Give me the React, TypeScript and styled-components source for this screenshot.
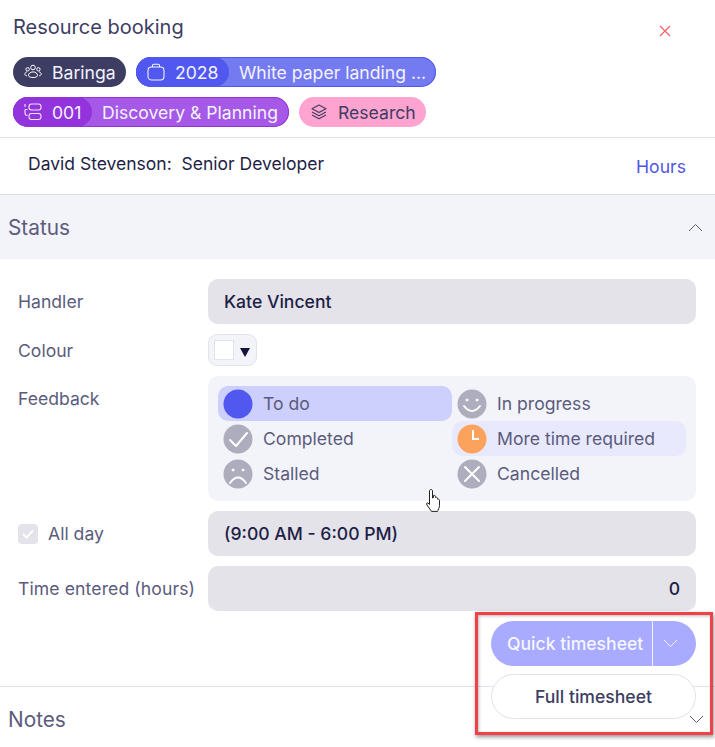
import React from "react";
import styled, { createGlobalStyle } from "styled-components";

const Global = createGlobalStyle`
  html, body { margin: 0; padding: 0; background: #fff; }
  body { font-family: Inter, "Noto Sans", sans-serif; overflow: hidden; }
`;

const Page = styled.div`
  position: relative;
  width: 715px;
  height: 747px;
  overflow: hidden;
  background: #fff;
`;

const Header = styled.header`
  height: 138px;
  box-sizing: border-box;
  padding: 16px 13px 0;
  position: relative;
  border-bottom: 1px solid #e2e2ea;
`;

const Title = styled.h1`
  margin: 0;
  font-size: 20px;
  line-height: 22px;
  font-weight: 400;
  color: #3d3d63;
`;

const CloseBtn = styled.button`
  position: absolute;
  right: 43px;
  top: 24px;
  width: 14px;
  height: 14px;
  padding: 0;
  border: 0;
  background: none;
  display: flex;
`;

const ChipRows = styled.div`
  margin-top: 19px;
  display: flex;
  flex-direction: column;
  gap: 10px;
`;

const ChipRow = styled.div`
  display: flex;
  gap: 10px;
`;

const Chip = styled.div<{ $bg: string; $fg?: string; $w: number; $edge?: string }>`
  height: 30px;
  box-sizing: border-box;
  border-radius: 15px;
  background: ${(p) => p.$bg};
  color: ${(p) => p.$fg ?? "#f3f3ff"};
  display: flex;
  align-items: center;
  font-size: 17.6px;
  font-weight: 400;
  white-space: nowrap;
  width: ${(p) => p.$w}px;
  overflow: hidden;
  ${(p) => (p.$edge ? `box-shadow: inset 0 0 0 1px ${p.$edge};` : "")}
`;

const ChipHead = styled.div<{ $bg: string; $w: number }>`
  height: 30px;
  width: ${(p) => p.$w}px;
  box-sizing: border-box;
  flex: none;
  background: ${(p) => p.$bg};
  border-radius: 0 15px 15px 0;
  display: flex;
  align-items: center;
  gap: 10px;
  padding-left: 11px;
`;

const ChipIcon = styled.span<{ $l: number; $r: number }>`
  display: flex;
  flex: none;
  margin-left: ${(p) => p.$l}px;
  margin-right: ${(p) => p.$r}px;
`;

const ChipText = styled.span`
  margin-left: 10px;
`;

const PersonRow = styled.div`
  height: 57px;
  box-sizing: border-box;
  padding: 15px 29px 0 28px;
  display: flex;
  justify-content: space-between;
  align-items: flex-start;
  border-bottom: 1px solid #dcdce4;
  font-size: 17.6px;
  line-height: 22px;
  color: #1e1e46;
`;

const PersonName = styled.span`
  white-space: pre;
  font-size: 17.5px;
`;

const HoursLink = styled.a`
  margin-top: 3px;
  color: #4f56e8;
`;

const SectionBand = styled.div`
  height: 64px;
  box-sizing: border-box;
  padding: 0 12px 0 8px;
  background: #f3f4fa;
  display: flex;
  align-items: center;
  justify-content: space-between;
  font-size: 20.8px;
  color: #5b5b7d;
`;

const Form = styled.div`
  padding: 20px 19px 0 18px;
  height: 428px;
  box-sizing: border-box;
  border-bottom: 1px solid #e2e2ea;
  display: grid;
  grid-template-columns: 190px 488px;
  grid-template-rows: 45px 32px 125px 45px 45px;
  row-gap: 10px;
`;

const Label = styled.label<{ $top?: number; $wide?: boolean }>`
  font-size: 17.6px;
  line-height: 22px;
  color: #5b5b7d;
  white-space: nowrap;
  align-self: ${(p) => (p.$top !== undefined ? "start" : "center")};
  ${(p) => (p.$top !== undefined ? `padding-top: ${p.$top}px;` : "")}
  ${(p) => (p.$wide ? "letter-spacing: 0.1px;" : "")}
  display: flex;
  align-items: center;
  gap: 10px;
`;

const Field = styled.div<{ $right?: boolean }>`
  background: #e3e3e9;
  border-radius: 10px;
  display: flex;
  align-items: center;
  justify-content: ${(p) => (p.$right ? "flex-end" : "flex-start")};
  padding: 0 16px;
  font-size: 17.6px;
  font-weight: 500;
  color: #1e1e46;
`;

const ColourBtn = styled.div`
  width: 49px;
  height: 32px;
  box-sizing: border-box;
  border: 1px solid #e2e2ea;
  border-radius: 9px;
  background: #f3f4fa;
  display: flex;
  align-items: center;
  padding-left: 5px;
  gap: 6px;
`;

const Swatch = styled.div`
  width: 20px;
  height: 20px;
  box-sizing: border-box;
  background: #fff;
  border: 1px solid #e2e2ea;
`;

const Caret = styled.span`
  width: 0;
  height: 0;
  margin-top: 5px;
  border-left: 5px solid transparent;
  border-right: 5px solid transparent;
  border-top: 9px solid #14143a;
`;

const Feedback = styled.div`
  background: #f3f4fa;
  border-radius: 10px;
  padding: 10px 10px 0;
  display: grid;
  grid-template-columns: 234px 234px;
  grid-auto-rows: 35px;
  align-content: start;
`;

const FeedbackItem = styled.div<{ $bg?: string }>`
  height: 35px;
  border-radius: 10px;
  background: ${(p) => p.$bg ?? "transparent"};
  display: flex;
  align-items: center;
  padding-left: 5px;
  gap: 10px;
  font-size: 17.6px;
  color: #5b5b7d;
`;

const Check = styled.span`
  width: 20px;
  height: 20px;
  border-radius: 4px;
  background: #e3e3e9;
  display: flex;
  align-items: center;
  justify-content: center;
`;

const Overlay = styled.div`
  position: absolute;
  left: 491px;
  top: 621px;
  width: 205px;
  display: flex;
  flex-direction: column;
  gap: 8px;
`;

const SplitBtn = styled.div`
  height: 45px;
  border-radius: 23px;
  background: #a8abff;
  color: #f6f6ff;
  display: flex;
  align-items: center;
  font-size: 17.6px;
  font-weight: 500;
`;

const SplitMain = styled.span`
  width: 162px;
  height: 45px;
  box-sizing: border-box;
  padding-left: 16px;
  display: flex;
  align-items: center;
  border-right: 1px solid #f3f3ff;
  white-space: nowrap;
`;

const SplitArrow = styled.span`
  flex: 1;
  display: flex;
  justify-content: center;
  padding-right: 9px;
`;

const OutlineBtn = styled.div`
  height: 45px;
  box-sizing: border-box;
  border-radius: 23px;
  border: 1px solid #e2e2ea;
  background: #fff;
  color: #3d3d63;
  font-size: 17.6px;
  font-weight: 500;
  display: flex;
  align-items: center;
  justify-content: center;
`;

const Annotation = styled.div`
  position: absolute;
  left: 475px;
  top: 612px;
  width: 238px;
  height: 123px;
  box-sizing: border-box;
  border: 3px solid #f04048;
  box-shadow: 1px 2px 4px rgba(60, 60, 60, 0.55), inset 1px 1px 3px rgba(60, 60, 60, 0.35);
  pointer-events: none;
`;

const NotesBand = styled.div`
  height: 60px;
  box-sizing: border-box;
  padding: 21px 11px 0 8px;
  display: flex;
  justify-content: space-between;
  align-items: flex-start;
  font-size: 20.8px;
  line-height: 24px;
  color: #5b5b7d;
`;

const NotesChevron = styled.span`
  display: flex;
  margin-top: 7px;
`;

const Pointer = styled.svg`
  position: absolute;
  left: 425px;
  top: 488px;
`;

const Glyph = styled.svg`
  flex: none;
  display: block;
`;

const Chev = ({ up, c = "#5b5b7d" }: { up?: boolean; c?: string }) => (
  <Glyph width="15" height="9" viewBox="0 0 15 9" fill="none">
    <path d={up ? "M1 8 L7.5 1.5 L14 8" : "M1 1 L7.5 7.5 L14 1"} stroke={c} strokeWidth="1" />
  </Glyph>
);

const Face = ({ kind }: { kind: string }) => {
  const bg = kind === "todo" ? "#5058f0" : kind === "clock" ? "#fba35c" : "#adadbd";
  return (
    <Glyph width="30" height="30" viewBox="0 0 30 30" fill="none">
      <circle cx="15" cy="15" r="14.5" fill={bg} />
      <g stroke="#fff" strokeWidth="2" fill="none" strokeLinecap="round" strokeLinejoin="round">
        {kind === "smile" && <path d="M7 17 Q15 27 23 17" />}
        {kind === "sad" && <path d="M7 24 Q15 13 23 24" />}
        {(kind === "smile" || kind === "sad") && (
          <>
            <circle cx="10" cy="11" r="1" fill="#fff" strokeWidth="1" />
            <circle cx="20" cy="11" r="1" fill="#fff" strokeWidth="1" />
          </>
        )}
        {kind === "check" && <path d="M7 16 L13 22 L24 9" />}
        {kind === "x" && <path d="M8 8 L22 22 M22 8 L8 22" />}
        {kind === "clock" && <path d="M16 6 V15 H22" strokeLinecap="butt" strokeLinejoin="miter" />}
      </g>
    </Glyph>
  );
};

const items: [string, string, string | undefined][] = [
  ["todo", "To do", "#cdcffc"],
  ["smile", "In progress", undefined],
  ["check", "Completed", undefined],
  ["clock", "More time required", "#e8e9fc"],
  ["sad", "Stalled", undefined],
  ["x", "Cancelled", undefined],
];

export default function App() {
  return (
    <Page>
      <Global />
      <Header>
        <Title>Resource booking</Title>
        <CloseBtn aria-label="Close">
          <Glyph width="14" height="14" viewBox="0 0 14 14">
            <path d="M2 2 L12 12 M12 2 L2 12" stroke="#f0646c" strokeWidth="1.3" />
          </Glyph>
        </CloseBtn>
        <ChipRows>
          <ChipRow>
            <Chip $bg="#3d3d63" $w={113}>
              <ChipIcon $l={11} $r={10}>
                <Glyph width="18" height="18" viewBox="0 0 18 18" fill="none" stroke="#ffffff" strokeWidth="1">
                  <circle cx="9" cy="4.5" r="2.3" />
                  <circle cx="3.6" cy="6.3" r="1.7" />
                  <circle cx="14.4" cy="6.3" r="1.7" />
                  <path d="M4.5 12.5c0-2.2 2-3.6 4.5-3.6s4.5 1.4 4.5 3.6c0 1.3-2 2-4.5 2s-4.5-.7-4.5-2z" />
                  <path d="M3 8.8c-1.3.3-2.2 1.4-2.2 2.5 0 .8.9 1.4 2.2 1.5M15 8.8c1.3.3 2.2 1.4 2.2 2.5 0 .8-.9 1.4-2.2 1.5" />
                </Glyph>
              </ChipIcon>
              Baringa
            </Chip>
            <Chip $bg="#747af0" $w={300} $edge="#5058f0">
              <ChipHead $bg="#5058f0" $w={93}>
                <Glyph width="18" height="18" viewBox="0 0 18 18" fill="none" stroke="#f3f3ff" strokeWidth="1.1">
                  <rect x="1" y="4" width="16" height="13" rx="3.5" />
                  <path d="M5.5 4V2.5c0-.8.5-1.2 1.2-1.2h4.6c.7 0 1.2.4 1.2 1.2V4" />
                </Glyph>
                2028
              </ChipHead>
              <ChipText>White paper landing ...</ChipText>
            </Chip>
          </ChipRow>
          <ChipRow>
            <Chip $bg="#a659e6" $w={276} $edge="#9333dc">
              <ChipHead $bg="#9333dc" $w={79}>
                <Glyph width="18" height="18" viewBox="0 0 18 18" fill="none" stroke="#f0e4fb" strokeWidth="1.1">
                  <rect x="5" y="1" width="12" height="6" rx="2.5" />
                  <rect x="5" y="10.5" width="12" height="6" rx="2.5" />
                  <path d="M1 1v3M1 6.5v3.5c0 1.5 1 2.5 2.5 2.5M3.5 6.5H1" />
                </Glyph>
                001
              </ChipHead>
              <ChipText>Discovery &amp; Planning</ChipText>
            </Chip>
            <Chip $bg="#ffa3d0" $fg="#3d3d63" $w={127}>
              <ChipIcon $l={12} $r={11}>
                <Glyph width="16" height="16" viewBox="0 0 16 16" fill="none" stroke="#3d3d63" strokeWidth="1.1" strokeLinejoin="round">
                  <path d="M8 1 L15 4.8 L8 8.5 L1 4.8 Z" />
                  <path d="M1 8 L8 11.7 L15 8" />
                  <path d="M1 11 L8 14.7 L15 11" />
                </Glyph>
              </ChipIcon>
              Research
            </Chip>
          </ChipRow>
        </ChipRows>
      </Header>

      <PersonRow>
        <PersonName>David Stevenson:  Senior Developer</PersonName>
        <HoursLink>Hours</HoursLink>
      </PersonRow>

      <SectionBand>
        Status
        <Chev up />
      </SectionBand>

      <Form>
        <Label>Handler</Label>
        <Field>Kate Vincent</Field>
        <Label $top={6}>Colour</Label>
        <ColourBtn>
          <Swatch />
          <Caret />
        </ColourBtn>
        <Label $top={12}>Feedback</Label>
        <Feedback>
          {items.map(([k, t, bg]) => (
            <FeedbackItem key={t} $bg={bg}>
              <Face kind={k} />
              {t}
            </FeedbackItem>
          ))}
        </Feedback>
        <Label>
          <Check>
            <Glyph width="12" height="10" viewBox="0 0 12 10" fill="none">
              <path d="M1 5 L4.5 8.5 L11 1.5" stroke="#fff" strokeWidth="2" />
            </Glyph>
          </Check>
          All day
        </Label>
        <Field>(9:00 AM - 6:00 PM)</Field>
        <Label $wide>Time entered (hours)</Label>
        <Field $right>0</Field>
      </Form>

      <NotesBand>
        Notes
        <NotesChevron>
          <Chev />
        </NotesChevron>
      </NotesBand>

      <Overlay>
        <SplitBtn>
          <SplitMain>Quick timesheet</SplitMain>
          <SplitArrow>
            <Chev c="#f3f3ff" />
          </SplitArrow>
        </SplitBtn>
        <OutlineBtn>Full timesheet</OutlineBtn>
      </Overlay>

      <Pointer width="20" height="26" viewBox="0 0 20 26" fill="#fff" stroke="#222" strokeWidth="1">
        <path d="M6 1.5c1 0 1.5.7 1.5 1.5v7l1-.4V7.5c1-.6 2 0 2 1v1c1-.5 2 0 2 1v.7c1-.4 2 .2 2 1.2v5c0 2.5-1.5 4.5-2 6H6.5L2 17c-1-1.500 0-2.500 1-2l1.500 1.500V3c0-.8.600-1.500 1.500-1.500z" />
      </Pointer>

      <Annotation />
    </Page>
  );
}
